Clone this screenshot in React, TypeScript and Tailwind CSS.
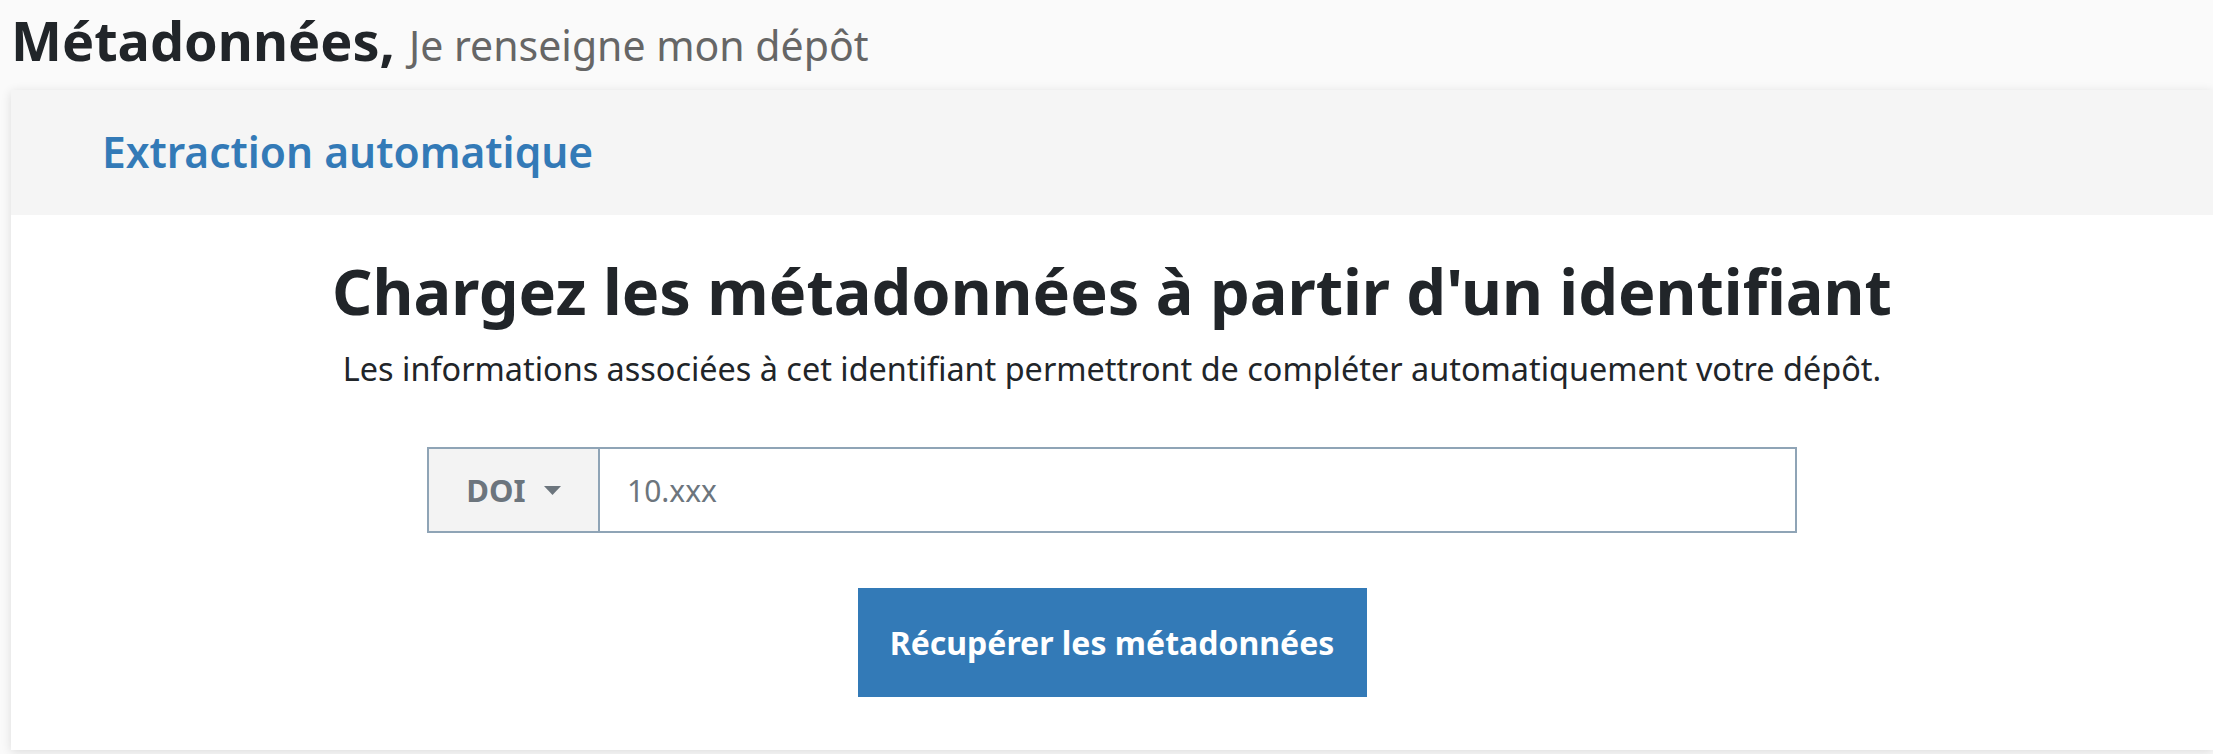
export default function App() {
  return (
    <div className="h-[754px] overflow-hidden bg-[#fafafa] font-['Noto_Sans',sans-serif] text-[#212529]">
      {/* Page title */}
      <div className="flex items-baseline gap-[14px] pl-[11px] pt-[8px]">
        <h1 className="text-[54px] font-bold leading-[1.2]">Métadonnées,</h1>
        <span className="text-[41px] font-normal leading-[1.2] text-[#666666]">
          Je renseigne mon dépôt
        </span>
      </div>

      {/* Card */}
      <div className="ml-[11px] mt-[17px] bg-white shadow-[0_2px_10px_rgba(0,0,0,0.12)]">
        <div className="flex h-[125px] items-center bg-[#f5f5f5] pl-[91px]">
          <h2 className="text-[42.5px] font-semibold text-[#337ab7]">Extraction automatique</h2>
        </div>

        <div className="flex flex-col items-center pb-[53px] pt-[38px]">
          <h3 className="text-[63px] font-bold leading-[1.2]">
            Chargez les métadonnées à partir d'un identifiant
          </h3>
          <p className="mt-[16px] text-[32.4px] leading-[1.5]">
            Les informations associées à cet identifiant permettront de compléter automatiquement votre dépôt.
          </p>

          <div className="mt-[54px] flex h-[86px] w-[1370px] border-2 border-[#8fa4b6]">
            <button className="flex w-[171px] items-center justify-center gap-[18px] border-r-2 border-[#8fa4b6] bg-[#f3f3f3] text-[31px] font-bold text-[#6c757d]">
              DOI
              <svg width="17" height="9" viewBox="0 0 17 9" className="fill-[#6c757d]">
                <path d="M0 0h17L8.5 9z" />
              </svg>
            </button>
            <input
              className="flex-1 bg-white pl-[27px] text-[30px] text-[#212529] outline-none placeholder:text-[#6c757d]"
              placeholder="10.xxx"
            />
          </div>

          <button className="mt-[55px] flex h-[109px] w-[509px] items-center justify-center bg-[#337ab7] text-[32px] font-bold text-white">
            Récupérer les métadonnées
          </button>
        </div>
      </div>
    </div>
  );
}
